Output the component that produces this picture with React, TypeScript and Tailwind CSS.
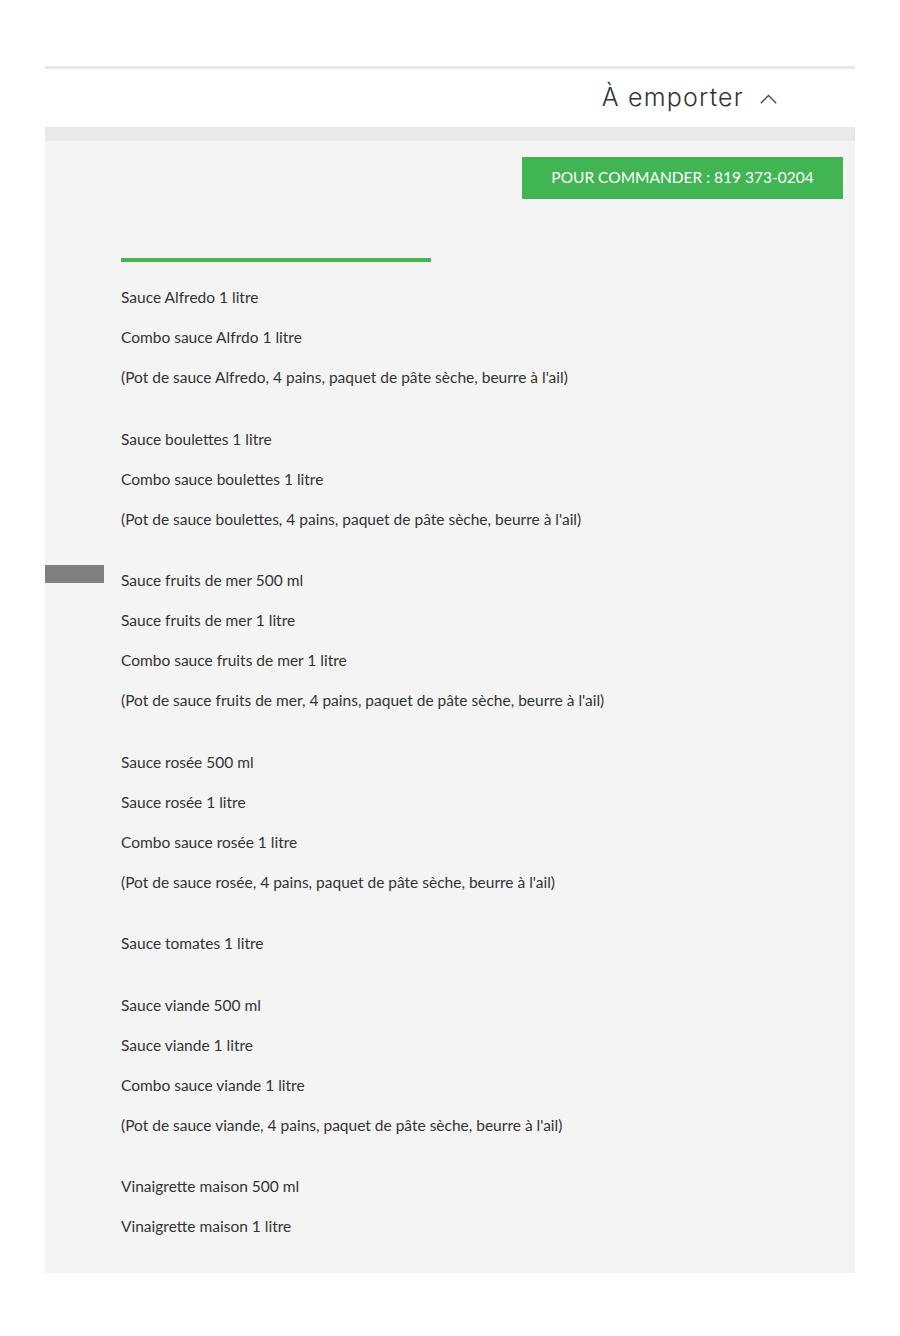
import React from 'react';

const groups: string[][] = [
  [
    'Sauce Alfredo 1 litre',
    'Combo sauce Alfrdo 1 litre',
    "(Pot de sauce Alfredo, 4 pains, paquet de pâte sèche, beurre à l'ail)",
  ],
  [
    'Sauce boulettes 1 litre',
    'Combo sauce boulettes 1 litre',
    "(Pot de sauce boulettes, 4 pains, paquet de pâte sèche, beurre à l'ail)",
  ],
  [
    'Sauce fruits de mer 500 ml',
    'Sauce fruits de mer 1 litre',
    'Combo sauce fruits de mer 1 litre',
    "(Pot de sauce fruits de mer, 4 pains, paquet de pâte sèche, beurre à l'ail)",
  ],
  [
    'Sauce rosée 500 ml',
    'Sauce rosée 1 litre',
    'Combo sauce rosée 1 litre',
    "(Pot de sauce rosée, 4 pains, paquet de pâte sèche, beurre à l'ail)",
  ],
  ['Sauce tomates 1 litre'],
  [
    'Sauce viande 500 ml',
    'Sauce viande 1 litre',
    'Combo sauce viande 1 litre',
    "(Pot de sauce viande, 4 pains, paquet de pâte sèche, beurre à l'ail)",
  ],
  ['Vinaigrette maison 500 ml', 'Vinaigrette maison 1 litre'],
];

export default function App() {
  return (
    <div className="min-h-[1336px] bg-white pt-[66px]">
      <div className="mx-[45px] border-t-[3px] border-[#e8e8e8]">
        {/* Header */}
        <div className="flex h-[58px] items-center justify-end pr-[78px] text-[#333]">
          <span className="font-['Inter',sans-serif] text-[25px] font-light tracking-[1.2px]">À emporter</span>
          <svg className="ml-[16px] mt-[2px]" width="17" height="10" viewBox="0 0 17 10" fill="none">
            <path d="M0.8 9.2 L8.5 1.5 L16.2 9.2" stroke="#444" strokeWidth="1.3" />
          </svg>
        </div>

        <div className="h-[14px] bg-[#e9e9e9]" />

        {/* Panel */}
        <div className="relative bg-[#f4f4f4] pb-[37px] pt-[16px] font-['Lato','Noto_Sans',sans-serif]">
          <div className="absolute left-0 top-[424px] h-[18px] w-[59px] bg-[#808080]" />

          <div className="flex justify-end pr-[12px]">
            <div className="flex h-[42px] w-[321px] items-center justify-center bg-[#41b453] text-[15.5px] text-white">
              POUR COMMANDER : 819 373-0204
            </div>
          </div>

          <div className="pl-[76px] pt-[59px]">
            <div className="h-[4px] w-[310px] bg-[#45b552]" />
            <div className="flex flex-col gap-[41.5px] pt-[25px]">
              {groups.map((g, i) => (
                <div key={i} className="flex flex-col gap-[20px]">
                  {g.map((line) => (
                    <p key={line} className="text-[15.5px] leading-[20px] text-[#333]">
                      {line}
                    </p>
                  ))}
                </div>
              ))}
            </div>
          </div>
        </div>
      </div>
    </div>
  );
}
